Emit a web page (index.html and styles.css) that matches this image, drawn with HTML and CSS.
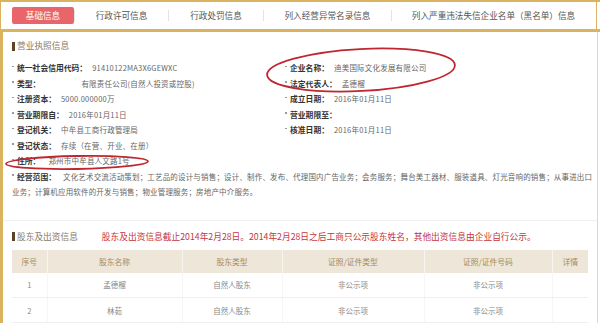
FILE: index.html
```html
<!DOCTYPE html>
<html lang="zh-CN">
<head>
<meta charset="utf-8">
<title>基础信息</title>
<link rel="stylesheet" href="styles.css">
</head>
<body>
<div class="page">
  <nav class="tabs">
    <span class="tab active">基础信息</span>
    <span class="tab t2">行政许可信息</span>
    <span class="tab t3">行政处罚信息</span>
    <span class="tab t4">列入经营异常名录信息</span>
    <span class="tab t5">列入严重违法失信企业名单（黑名单）信息</span>
  </nav>
  <main class="panel">
    <section class="license">
      <h2 class="sec-title">营业执照信息</h2>
      <div class="fields">
        <div class="field"><span class="label">统一社会信用代码：</span><span class="val">91410122MA3X6GEWXC</span></div>
        <div class="field"><span class="label">企业名称：</span><span class="val">迪美国际文化发展有限公司</span></div>
        <div class="field"><span class="label">类型：</span><span class="val far">有限责任公司(自然人投资或控股)</span></div>
        <div class="field"><span class="label">法定代表人：</span><span class="val">孟德榴</span></div>
        <div class="field"><span class="label">注册资本：</span><span class="val">5000.000000万</span></div>
        <div class="field"><span class="label">成立日期：</span><span class="val">2016年01月11日</span></div>
        <div class="field"><span class="label">营业期限自：</span><span class="val">2016年01月11日</span></div>
        <div class="field"><span class="label">营业期限至：</span><span class="val"></span></div>
        <div class="field"><span class="label">登记机关：</span><span class="val">中牟县工商行政管理局</span></div>
        <div class="field"><span class="label">核准日期：</span><span class="val">2016年01月11日</span></div>
        <div class="field"><span class="label">登记状态：</span><span class="val">存续（在营、开业、在册）</span></div>
        <div class="field empty"></div>
        <div class="field full"><span class="label">住所：</span><span class="val mid">郑州市中牟县人文路1号</span></div>
      </div>
      <p class="field scope"><span class="label">经营范围：</span><span class="val wide">文化艺术交流活动策划；工艺品的设计与销售；设计、制作、发布、代理国内广告业务；会务服务；舞台美工器材、服装道具、灯光音响的销售；从事进出口业务；计算机应用软件的开发与销售；物业管理服务；房地产中介服务。</span></p>
    </section>
    <section class="holders">
      <div class="sec-head">
        <h2 class="sec-title">股东及出资信息</h2>
        <span class="note">股东及出资信息截止2014年2月28日。2014年2月28日之后工商只公示股东姓名，其他出资信息由企业自行公示。</span>
      </div>
      <table class="grid">
        <colgroup>
          <col class="c1"><col class="c2"><col class="c3"><col class="c4"><col class="c5"><col class="c6">
        </colgroup>
        <thead>
          <tr><th>序号</th><th>股东名称</th><th>股东类型</th><th>证照/证件类型</th><th>证照/证件号码</th><th>详情</th></tr>
        </thead>
        <tbody>
          <tr><td>1</td><td>孟德榴</td><td>自然人股东</td><td>非公示项</td><td>非公示项</td><td></td></tr>
          <tr><td>2</td><td>林茹</td><td>自然人股东</td><td>非公示项</td><td>非公示项</td><td></td></tr>
        </tbody>
      </table>
    </section>
  </main>
  <svg class="marks" width="600" height="323" viewBox="0 0 600 323" aria-hidden="true">
    <ellipse cx="361" cy="70" rx="94" ry="21" transform="rotate(-3 361 70)" />
    <ellipse cx="77" cy="162.5" rx="71" ry="6.5" transform="rotate(-1 77 162.5)" />
  </svg>
</div>
</body>
</html>
```
FILE: styles.css
```css
* {
  box-sizing: border-box;
  margin: 0;
  padding: 0;
}

body {
  font-family: "Noto Sans CJK SC", "Noto Sans", sans-serif;
  background: #ffffff;
  width: 600px;
  height: 323px;
  overflow: hidden;
}

.page {
  position: relative;
  width: 600px;
  height: 323px;
}

/* ---------- tabs ---------- */
.tabs {
  display: flex;
  align-items: center;
  height: 32px;
  border-top: 2px solid #d9b360;
  border-bottom: 3px solid #d9b360;
  border-left: 1px solid #d9b360;
  padding-left: 11px;
  background: #fff;
}

.tab {
  font-size: 8.6px;
  color: #555;
  text-align: center;
  height: 11px;
  line-height: 11px;
  border-left: 1px solid #e3e3e3;
  white-space: nowrap;
}

.tab.active {
  width: 62px;
  height: 17px;
  line-height: 17px;
  background: #e9656c;
  color: #fff;
  border: 0;
  border-radius: 2px;
}

.t2 { width: 94px; }
.t3 { width: 95px; }
.t4 { width: 128px; }
.t5 { width: 206px; border-right: 1px solid #d9b360; height: 27px; line-height: 27px; border-left: 0; position: relative; }
.t5::before {
  content: "";
  position: absolute;
  left: 0;
  top: 8px;
  height: 11px;
  border-left: 1px solid #e3e3e3;
}

/* ---------- panel ---------- */
.panel {
  width: 598px;
  height: 291px;
  border-left: 3px solid #d9b360;
  border-right: 1px solid #ead7ab;
  padding: 0 9px;
}

.sec-title {
  display: flex;
  align-items: center;
  font-size: 8.7px;
  font-weight: normal;
  color: #8c7a63;
  line-height: 12px;
  white-space: nowrap;
}

.sec-title::before {
  content: "";
  width: 3px;
  height: 9px;
  background: #5b4325;
  margin-right: 2px;
}

.license > .sec-title {
  padding-top: 8px;
}

.fields {
  display: grid;
  grid-template-columns: 273px 1fr;
  margin-top: 8px;
}

.field {
  font-size: 7.5px;
  line-height: 15.5px;
  height: 15.5px;
  white-space: nowrap;
}

.field.full {
  grid-column: 1 / -1;
}

.field::before {
  content: "";
  display: inline-block;
  width: 1.5px;
  height: 1.5px;
  background: #9a9a9a;
  margin-right: 3.5px;
  vertical-align: 4px;
}

.field.empty::before {
  display: none;
}

.label {
  font-weight: bold;
  color: #333;
  font-size: 7.8px;
  line-height: 15.5px;
}

.val {
  color: #666;
  font-size: 7.5px;
  line-height: 15.5px;
  margin-left: 5px;
  letter-spacing: 0.2px;
}

.val.far { margin-left: 41px; }
.val.mid { margin-left: 8px; }
.val.wide { margin-left: 7px; letter-spacing: 0.17px; }

.scope {
  white-space: normal;
  height: auto;
  margin-right: -6px;
}

/* ---------- shareholders ---------- */
.holders {
  margin: 20px -9px 0;
  padding: 0 9px;
  border-top: 1px solid #efefef;
}

.sec-head {
  display: flex;
  align-items: center;
  padding-top: 10px;
  line-height: 12px;
}

.note {
  color: #c5353c;
  font-size: 8.72px;
  margin-left: 24px;
  white-space: nowrap;
}

.grid {
  width: 576px;
  margin-top: 7px;
  border-collapse: collapse;
  table-layout: fixed;
}

.c1 { width: 35px; }
.c2 { width: 135px; }
.c3 { width: 100px; }
.c4 { width: 142px; }
.c5 { width: 128px; }
.c6 { width: 36px; }

.grid th {
  height: 23px;
  background: #eee6d8;
  color: #a68a60;
  font-weight: normal;
  font-size: 7.8px;
  border-left: 1px solid #f8f4ee;
}

.grid th:first-child,
.grid td:first-child {
  border-left: 0;
}

.grid td {
  height: 25px;
  text-align: center;
  color: #888;
  font-size: 7.5px;
  border-bottom: 1px solid #efefef;
  border-left: 1px solid #f6f6f6;
}

/* ---------- annotation marks ---------- */
.marks {
  position: absolute;
  left: 0;
  top: 0;
  pointer-events: none;
}

.marks ellipse {
  fill: none;
  stroke: #c0262f;
  stroke-width: 1.8;
}
```
